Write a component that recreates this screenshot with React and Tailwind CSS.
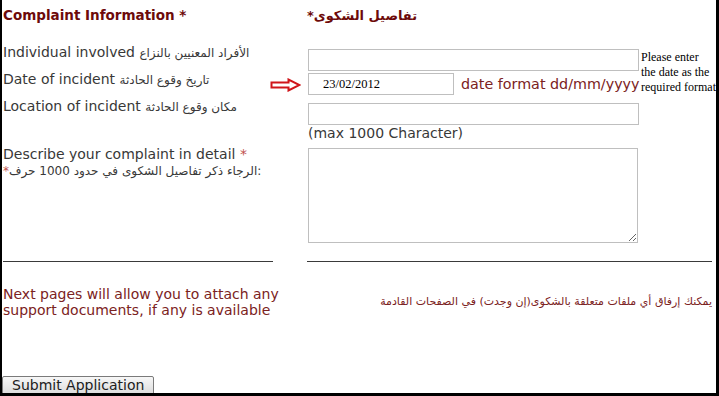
import React from 'react';

const font = { fontFamily: '"DejaVu Sans", Verdana, sans-serif' };

const RedArrow = () => (
  <svg width="31" height="14" viewBox="0 0 31 14" className="shrink-0">
    <path d="M1.5 4.5 H18.5 V1.5 L29.5 7 L18.5 12.5 V9.5 H1.5 Z" fill="#fff" stroke="#d0161b" strokeWidth="2" strokeLinejoin="miter" />
  </svg>
);

const Label = ({ en, ar, children }) => (
  <div className="flex h-[27px] pl-px">
    <span className="text-[14px] leading-[17px] text-[#383838] whitespace-nowrap">
      {en} <span className="text-[12px]">{ar}</span>
    </span>
    {children}
  </div>
);

const TextBox = ({ className = '', value = '' }) => (
  <input
    readOnly
    value={value}
    className={`h-[22px] border border-[#bfbfbf] bg-white text-[12.5px] text-black outline-none ${className}`}
    style={{ fontFamily: '"Liberation Serif", "Times New Roman", serif' }}
  />
);

export default function App() {
  return (
    <div
      className="relative w-[719px] h-[396px] overflow-hidden bg-white border-l-2 border-r-[3px] border-b-[3px] border-black"
      style={font}
    >
      {/* header */}
      <div className="flex h-[44px] pt-[3px]">
        <div className="w-[305px] shrink-0 pl-px">
          <span className="text-[13.5px] leading-[18px] font-bold text-[#6d0a0a] whitespace-nowrap">Complaint Information *</span>
        </div>
        <div>
          <span dir="rtl" className="inline-block text-[13px] leading-[18px] font-bold text-[#6d0a0a]">تفاصيل الشكوى*</span>
        </div>
      </div>

      {/* individual + date */}
      <div className="flex">
        <div className="w-[305px] shrink-0">
          <Label en="Individual involved" ar="الأفراد المعنيين بالنزاع" />
          <Label en="Date of incident" ar="تاريخ وقوع الحادثة">
            <div className="ml-auto mr-[6px] self-center"><RedArrow /></div>
          </Label>
        </div>
        <div className="flex">
          <div className="w-[333px] shrink-0 pl-px">
            <div className="h-[27px] pt-[2px]"><TextBox className="w-[331px]" /></div>
            <div className="h-[27px] pt-[2px] flex items-start">
              <TextBox className="w-[146px] pl-[14px]" value="23/02/2012" />
              <span className="ml-[7px] text-[14.3px] leading-[22px] text-[#7b2222] whitespace-nowrap">date format dd/mm/yyyy</span>
            </div>
          </div>
          <div
            className="ml-px mt-[6px] text-[12px] leading-[15px] text-black whitespace-nowrap"
            style={{ fontFamily: '"Liberation Serif", "Times New Roman", serif' }}
          >
            Please enter<br />the date as the<br />required format
          </div>
        </div>
      </div>

      {/* location */}
      <div className="flex h-[27px]">
        <div className="w-[305px] shrink-0">
          <Label en="Location of incident" ar="مكان وقوع الحادثة" />
        </div>
        <div className="pl-px pt-[2px]"><TextBox className="w-[331px]" /></div>
      </div>

      {/* max chars */}
      <div className="flex h-[20px]">
        <div className="w-[305px] shrink-0" />
        <div className="pl-px text-[14px] leading-[17px] text-[#383838]">(max 1000 Character)</div>
      </div>

      {/* describe */}
      <div className="flex">
        <div className="w-[305px] shrink-0 pl-px pt-px">
          <div className="text-[14px] leading-[17px] text-[#383838] whitespace-nowrap">
            Describe your complaint in detail <span className="text-[#c0504d]">*</span>
          </div>
          <div className="text-[12px] leading-[16px] text-[#383838] whitespace-nowrap">
            <span className="text-[#c0504d]">*</span>الرجاء ذكر تفاصيل الشكوى في حدود 1000 حرف:
          </div>
        </div>
        <div className="pl-px pt-[3px]">
          <textarea readOnly className="block w-[330px] h-[95px] border border-[#bfbfbf] bg-white outline-none" />
        </div>
      </div>

      {/* rules */}
      <div className="flex mt-[18px]">
        <div className="w-[305px] shrink-0 pl-px">
          <div className="w-[270px] h-px bg-[#3a3a3a]" />
        </div>
        <div className="w-[405px] h-px bg-[#3a3a3a]" />
      </div>

      {/* attachments note */}
      <div className="flex items-center mt-[24px]">
        <div className="w-[305px] shrink-0 pl-px text-[14px] leading-[16px] text-[#7b2222]">
          Next pages will allow you to attach any<br />support documents, if any is available
        </div>
        <div dir="rtl" className="w-[405px] text-[11px] leading-[16px] text-[#7b2222] whitespace-nowrap">
          يمكنك إرفاق أي ملفات متعلقة بالشكوى(إن وجدت) في الصفحات القادمة
        </div>
      </div>

      {/* submit */}
      <div className="mt-[55px]">
        <button className="h-[20px] px-[9px] border border-[#7a7a7a] rounded-[2px] bg-gradient-to-b from-[#f7f7f7] to-[#dadada] text-[14px] leading-[17px] text-[#202020] whitespace-nowrap">
          Submit Application
        </button>
      </div>
    </div>
  );
}
